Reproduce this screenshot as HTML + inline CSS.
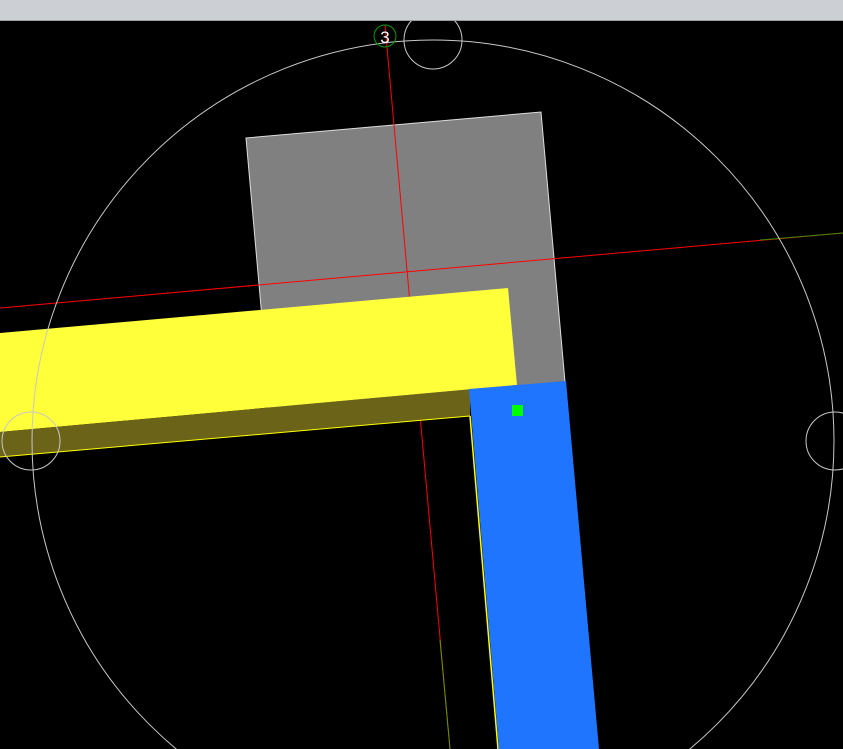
<!DOCTYPE html>
<html><head><style>
html,body{margin:0;padding:0;background:#000;width:843px;height:749px;overflow:hidden}
.bar{position:absolute;left:0;top:0;width:843px;height:20px;background:#ccd0d5;border-bottom:1px solid #9aa0a6}
svg{position:absolute;left:0;top:0}
</style></head><body>
<svg width="843" height="749" viewBox="0 0 843 749">
<rect width="843" height="749" fill="#000"/>
<polygon points="246,138 541,112 565,382 270,408" fill="#808080" stroke="#ddd" stroke-width="1"/>
<line x1="0" y1="308" x2="843" y2="233" stroke="#ff0000" stroke-width="1"/>
<line x1="760" y1="240" x2="843" y2="233" stroke="#3a8a00" stroke-width="1"/>
<line x1="385" y1="25" x2="450" y2="749" stroke="#ff0000" stroke-width="1"/>
<line x1="440" y1="640" x2="450" y2="749" stroke="#5a9a00" stroke-width="1"/>
<polygon points="0,333 508,288 517,385 0,432" fill="#ffff3a"/>
<polygon points="0,432 517,385 520,389 470,392 470,416 0,457" fill="#6b6418"/>
<line x1="0" y1="457" x2="470" y2="416" stroke="#ffff00" stroke-width="1"/>
<line x1="470" y1="416" x2="498" y2="749" stroke="#ffff00" stroke-width="1.5"/>
<polygon points="469,389 566,381 599,749 499,749" fill="#1f75fe"/>
<rect x="512" y="405" width="11" height="11" fill="#00ff00"/>
<circle cx="433" cy="441" r="401" fill="none" stroke="#c8c8c8" stroke-width="1"/>
<circle cx="433" cy="40" r="29" fill="none" stroke="#c8c8c8" stroke-width="1"/>
<circle cx="31" cy="441" r="29" fill="none" stroke="#c8c8c8" stroke-width="1"/>
<circle cx="835" cy="441" r="29" fill="none" stroke="#c8c8c8" stroke-width="1"/>
<circle cx="385" cy="36" r="11" fill="none" stroke="#00a000" stroke-width="1"/>
<text x="385" y="43" fill="#fff" font-family="Liberation Sans, sans-serif" font-size="17" text-anchor="middle">3</text>
</svg>
<div class="bar"></div>
</body></html>
